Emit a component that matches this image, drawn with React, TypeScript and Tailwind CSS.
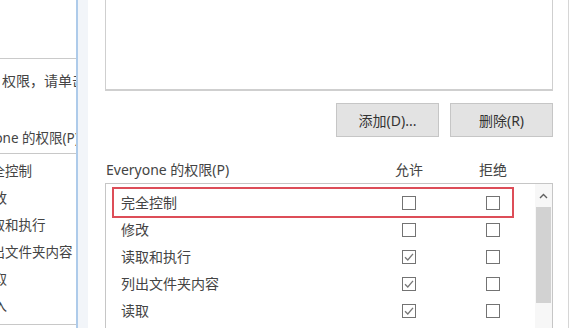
import React from "react";

const rows = [
  { name: "完全控制", allow: false, deny: false, selected: true },
  { name: "修改", allow: false, deny: false },
  { name: "读取和执行", allow: true, deny: false },
  { name: "列出文件夹内容", allow: true, deny: false },
  { name: "读取", allow: true, deny: false },
  { name: "写入", allow: false, deny: false },
];

const backRows = [
  { text: "完全控制", ml: "ml-[-22px]" },
  { text: "修改", ml: "ml-[-20px]" },
  { text: "读取和执行", ml: "ml-[-22px]" },
  { text: "列出文件夹内容", ml: "ml-[-22px]" },
  { text: "读取", ml: "ml-[-20px]" },
  { text: "写入", ml: "ml-[-20px]" },
];

function Box({ checked }: { checked: boolean }) {
  return (
    <svg width="14" height="14" viewBox="0 0 14 14" className="shrink-0">
      <rect x="0.5" y="0.5" width="13" height="13" fill="#fff" stroke="#737373" />
      {checked && (
        <path d="M3 7.2 L5.8 10 L11 3.8" fill="none" stroke="#777" strokeWidth="1.3" />
      )}
    </svg>
  );
}

export default function App() {
  return (
    <div className="w-[572px] h-[328px] overflow-hidden bg-white flex text-[#444] font-['Noto_Sans','Noto_Sans_CJK_SC',sans-serif]">
      {/* window behind */}
      <div className="w-[78px] shrink-0 border-r-2 border-[#aecbea] bg-white flex flex-col overflow-hidden text-[13.5px]">
        <div className="h-[59px] shrink-0 border-b border-[#cacaca]" />
        <div className="mt-[12px] h-[20px] leading-[20px] whitespace-nowrap ml-[2px] text-[14px]">权限，请单击“编辑”。</div>
        <div className="mt-[37px] h-[20px] leading-[20px] whitespace-nowrap ml-[-40px]">Everyone 的权限(P)</div>
        <div className="mt-[5px] h-[172px] shrink-0 border-y border-[#c8c8c8] pt-[4px]">
          {backRows.map((r) => (
            <div key={r.text} className={`h-[27px] leading-[27px] whitespace-nowrap ${r.ml}`}>
              {r.text}
            </div>
          ))}
        </div>
      </div>

      {/* gap between windows */}
      <div className="w-[10px] shrink-0 bg-[#f2f5f9]" />

      {/* security dialog */}
      <div className="w-[481px] shrink-0 border-r border-[#d6d6d6] pl-[17px] pr-[15px] flex flex-col text-[14px]">
        <div className="h-[91px] shrink-0 border-x border-b-2 border-[#cfcfcf] bg-white" />

        <div className="mt-[12px] h-[34px] flex justify-end gap-[11px]">
          <button className="w-[103px] h-[34px] bg-[#e3e3e3] border border-[#c6c6c6] text-[#333]">添加(D)...</button>
          <button className="w-[103px] h-[34px] bg-[#e3e3e3] border border-[#c6c6c6] text-[#333]">删除(R)</button>
        </div>

        <div className="mt-[23px] h-[20px] leading-[20px] flex pr-[40px]">
          <div className="flex-1 pl-[1px]">Everyone 的权限(P)</div>
          <div className="w-[40px] text-center">允许</div>
          <div className="w-[40px] ml-[44px] text-center">拒绝</div>
        </div>

        <div className="mt-[3px] h-[170px] shrink-0 border border-[#c6c6c6] flex">
          <div className="flex-1 pt-[5px] pl-[8px]">
            {rows.map((r) => (
              <div
                key={r.name}
                className={`w-[398px] h-[27px] flex items-center pl-[7px] pr-[12px] ${
                  r.selected ? "outline-2 outline-[#dd4d58]" : ""
                }`}
              >
                <span className="flex-1 whitespace-nowrap">{r.name}</span>
                <Box checked={r.allow} />
                <span className="w-[70px]" />
                <Box checked={r.deny} />
              </div>
            ))}
          </div>
          <div className="w-[17px] flex flex-col bg-[#f7f7f7]">
            <div className="h-[23px] flex items-center justify-center">
              <svg width="9" height="6" viewBox="0 0 9 6">
                <path d="M1 5 L4.5 1.5 L8 5" fill="none" stroke="#606060" strokeWidth="1.4" />
              </svg>
            </div>
            <div className="h-[96px] mx-[1px] bg-[#d2d2d2]" />
            <div className="flex-1" />
            <div className="h-[23px] flex items-center justify-center">
              <svg width="9" height="6" viewBox="0 0 9 6">
                <path d="M1 1 L4.5 4.5 L8 1" fill="none" stroke="#606060" strokeWidth="1.4" />
              </svg>
            </div>
          </div>
        </div>
      </div>
    </div>
  );
}
